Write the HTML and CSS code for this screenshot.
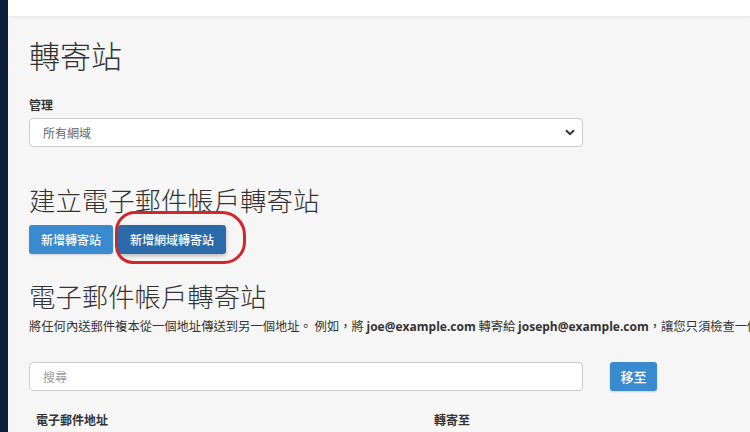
FILE: index.html
```html
<!DOCTYPE html>
<html lang="zh-Hant">
<head>
<meta charset="utf-8">
<title>轉寄站</title>
<link rel="stylesheet" href="styles.css">
</head>
<body>
<div class="app">
  <aside class="sidebar"></aside>
  <main class="main">
    <div class="topbar"></div>
    <div class="content">
      <h1 class="page-title">轉寄站</h1>
      <label class="field-label">管理</label>
      <div class="select">
        <span class="select-text">所有網域</span>
        <svg class="chev" width="10" height="7" viewBox="0 0 10 7"><path d="M1 1.2 L5 5.2 L9 1.2" fill="none" stroke="#333" stroke-width="2"/></svg>
      </div>
      <h2 class="section-title first">建立電子郵件帳戶轉寄站</h2>
      <div class="btn-row">
        <button class="btn">新增轉寄站</button>
        <span class="highlight-wrap">
          <button class="btn btn-dark">新增網域轉寄站</button>
          <span class="highlight"></span>
        </span>
      </div>
      <h2 class="section-title second">電子郵件帳戶轉寄站</h2>
      <p class="desc">將任何內送郵件複本從一個地址傳送到另一個地址。 例如，將 <b>joe@example.com</b> 轉寄給 <b>joseph@example.com</b>，讓您只須檢查一個帳戶即可。</p>
      <div class="search-row">
        <div class="input"><span class="placeholder">搜尋</span></div>
        <button class="btn btn-go">移至</button>
      </div>
      <div class="table-head">
        <span class="col col-1">電子郵件地址</span>
        <span class="col col-2">轉寄至</span>
      </div>
    </div>
  </main>
</div>
</body>
</html>
```
FILE: styles.css
```css
html, body {
  margin: 0;
  padding: 0;
  width: 750px;
  height: 432px;
  overflow: hidden;
  background: #f6f6f6;
  font-family: "Open Sans", "Noto Sans CJK TC", sans-serif;
  color: #333;
}
.app {
  display: flex;
  height: 432px;
}
.sidebar {
  width: 8px;
  flex: 0 0 8px;
  background: #0c1d3d;
}
.main {
  flex: 1;
  overflow: hidden;
  background: #f6f6f6;
}
.topbar {
  height: 16px;
  background: #fff;
  box-shadow: 0 1px 4px rgba(0,0,0,0.08);
  position: relative;
}
.content {
  padding-left: 21px;
  white-space: nowrap;
}
.page-title {
  margin: 21px 0 0;
  font-size: 31px;
  line-height: 36px;
  font-weight: 300;
  color: #333;
  font-family: "Noto Sans CJK TC", sans-serif;
}
.field-label {
  display: block;
  margin-top: 24px;
  font-size: 12px;
  line-height: 18px;
  font-weight: 700;
}
.select {
  margin-top: 3px;
  width: 554px;
  height: 29px;
  box-sizing: border-box;
  background: #fff;
  border: 1px solid #ccc;
  border-radius: 4px;
  display: flex;
  align-items: center;
  justify-content: space-between;
  padding: 0 7px 0 13px;
}
.select-text {
  font-size: 12px;
  color: #666;
}
.section-title {
  font-size: 26.4px;
  line-height: 30px;
  font-weight: 300;
  margin: 0;
  font-family: "Noto Sans CJK TC", sans-serif;
  color: #333;
}
.section-title.first { margin-top: 38px; }
.section-title.second { margin-top: 27px; }
.btn-row {
  margin-top: 10px;
  display: flex;
  gap: 5px;
}
.btn {
  height: 29px;
  border: none;
  border-radius: 3px;
  padding: 0 12px;
  background: #3a8ad0;
  color: #fff;
  font-family: "Noto Sans CJK TC", sans-serif;
  font-size: 12px;
  font-weight: 500;
  box-shadow: 0 1px 2px rgba(0,0,0,0.15);
}
.btn-dark {
  background: #2b6aa8;
  box-shadow: 0 2px 4px rgba(0,0,0,0.25);
}
.highlight-wrap {
  position: relative;
  display: inline-block;
}
.highlight {
  position: absolute;
  left: -3px;
  top: -14px;
  width: 125px;
  height: 47px;
  border: 3px solid #d3262c;
  border-radius: 20px 24px 22px 18px;
  pointer-events: none;
}
.desc {
  margin: 6px 0 0;
  font-size: 12.3px;
  line-height: 18px;
  color: #333;
  font-family: "Noto Sans CJK TC", sans-serif;
}
.desc b {
  font-family: "Open Sans", sans-serif;
  font-weight: 700;
  font-size: 12px;
}
.search-row {
  margin-top: 26px;
  display: flex;
  gap: 27px;
}
.input {
  width: 554px;
  height: 29px;
  box-sizing: border-box;
  background: #fff;
  border: 1px solid #ccc;
  border-radius: 4px;
  display: flex;
  align-items: center;
  padding-left: 13px;
}
.placeholder {
  font-size: 12px;
  color: #999;
}
.btn-go {
  width: 47px;
  padding: 0;
  font-size: 13px;
}
.table-head {
  margin-top: 21px;
  display: flex;
  font-size: 12px;
  line-height: 18px;
  font-weight: 700;
}
.col-1 {
  padding-left: 7px;
  width: 398px;
}
```
